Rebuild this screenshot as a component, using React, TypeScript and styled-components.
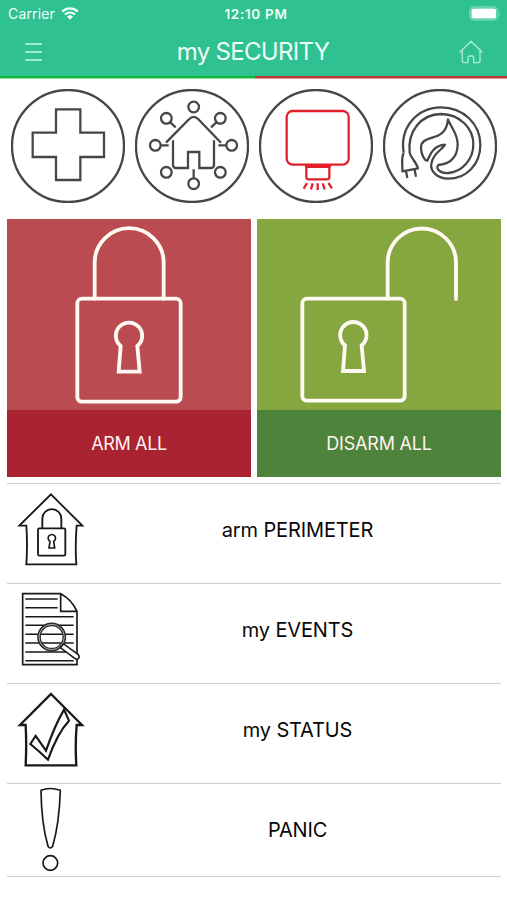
import React from "react";
import styled, { createGlobalStyle } from "styled-components";

const GlobalStyle = createGlobalStyle`
  * { box-sizing: border-box; }
  body { margin: 0; background: #fff; font-family: Inter, "Liberation Sans", sans-serif; }
  svg { display: block; fill: none; flex: none; }
`;

const Screen = styled.main`
  width: 507px;
  height: 900px;
  overflow: hidden;
  background: #fff;
`;

const Header = styled.header`
  height: 76px;
  background: #30c192;
  color: #edfff7;
`;

const StatusBar = styled.div`
  display: grid;
  grid-template-columns: 1fr auto 1fr;
  align-items: center;
  height: 27px;
  padding: 0 6px 0 8px;
  font-size: 14px;
`;

const Carrier = styled.div`
  display: flex;
  align-items: center;
  gap: 6px;
  letter-spacing: 0.15px;
`;

const Clock = styled.div`
  padding-left: 3px;
  font-size: 13.5px;
  font-weight: 600;
  letter-spacing: 0.7px;
`;

const BatterySlot = styled.div`
  display: flex;
  justify-content: flex-end;
`;

const NavBar = styled.div`
  display: flex;
  align-items: center;
  justify-content: space-between;
  height: 49px;
  padding: 0 23px 0 24px;
`;

const Title = styled.h1`
  margin: 0 0 0 5px;
  font-size: 24px;
  line-height: 49px;
  font-weight: 400;
  letter-spacing: -0.7px;
`;

const IconButton = styled.button`
  padding: 0;
  border: 0;
  background: none;
  color: inherit;
`;

const Progress = styled.div`
  display: grid;
  grid-template-columns: 255px 1fr;
  height: 3px;
`;

const ProgressPart = styled.div<{ $top: string; $bottom: string }>`
  background: linear-gradient(${(p) => p.$top} 67%, ${(p) => p.$bottom} 67%);
`;

const Categories = styled.nav`
  display: flex;
  gap: 10px;
  padding: 10px 11px 16px;
`;

const CategoryIcon = styled.svg`
  width: 114px;
  height: 114px;
  stroke: #464547;
  stroke-width: 6.8;
`;

const Tiles = styled.section`
  display: grid;
  grid-template-columns: 244px 244px;
  gap: 6px;
  padding: 0 7px 6px;
`;

const Tile = styled.button<{ $color: string }>`
  display: block;
  height: 258px;
  padding: 0;
  border: 0;
  background: ${(p) => p.$color};
  font-family: inherit;
`;

const TileIcon = styled.svg`
  width: 244px;
  height: 191px;
  stroke: #fff9f4;
  stroke-width: 11.5;
  stroke-linejoin: round;
  stroke-linecap: round;
`;

const TileLabel = styled.div<{ $color: string; $spacing: number }>`
  height: 67px;
  line-height: 67px;
  text-align: center;
  font-size: 18px;
  letter-spacing: ${(p) => p.$spacing}px;
  color: #fff2ee;
  background: ${(p) => p.$color};
`;

const List = styled.section`
  margin: 0 6px 0 7px;
  border-top: 1px solid #cdcdcd;
`;

const Row = styled.div<{ $height: number }>`
  display: grid;
  grid-template-columns: 90px 1fr 3px;
  height: ${(p) => p.$height}px;
  border-bottom: 1px solid #cdcdcd;
`;

const RowIcon = styled.svg`
  width: 90px;
  height: 100%;
  stroke: #18181a;
`;

const RowLabel = styled.div<{ $spacing: number }>`
  height: 92px;
  line-height: 92px;
  text-align: center;
  font-size: 20px;
  letter-spacing: ${(p) => p.$spacing}px;
  color: #080808;
`;

const Wifi = () => (
  <svg width="18" height="13" viewBox="0 0 18 13">
    <path d="M1.2 4.6C5.7.4 12.3.4 16.8 4.6M4 7.5c3-2.6 7-2.6 10 0" stroke="currentColor" strokeWidth="2.3" />
    <path d="M5.9 9.6c1.9-1.7 4.3-1.7 6.2 0L9 12.7z" fill="currentColor" />
  </svg>
);

const Battery = () => (
  <svg width="32" height="15" viewBox="0 0 32 15">
    <rect x=".8" y="1" width="28" height="13" rx="4" stroke="#8fe2c5" />
    <rect x="2.4" y="2.6" width="24.8" height="9.8" rx="2" fill="#fff" />
    <path d="M30.3 5.5q1.5 2 0 4" fill="#8fe2c5" />
  </svg>
);

const Keyhole = ({ x = 0, y = 0 }: { x?: number; y?: number }) => (
  <path transform={`translate(${x} ${y})`} d="M362 408A39.5 39.5 0 1 1 412 408L419 485H356Z" strokeLinejoin="miter" />
);

export default function App() {
  return (
    <>
      <GlobalStyle />
      <Screen>
        <Header>
          <StatusBar>
            <Carrier>Carrier <Wifi /></Carrier>
            <Clock>12:10 PM</Clock>
            <BatterySlot><Battery /></BatterySlot>
          </StatusBar>
          <NavBar>
            <IconButton aria-label="Menu">
              <svg width="19" height="20" viewBox="0 0 19 20" stroke="#c9f7e5" strokeWidth="1.5">
                <path d="M1.3 2H18M1.3 10H18M1.3 18H18" />
              </svg>
            </IconButton>
            <Title>my SECURITY</Title>
            <IconButton aria-label="Home">
              <svg width="26" height="26" viewBox="615 116 78 78" stroke="#a8eed6" strokeWidth="4" strokeLinejoin="round" strokeLinecap="round">
                <path d="M621 155L654 123L687 155M628 151V183Q628 187 632 187H645V173Q645 167 651 167H657Q662 167 662 173V187H677Q681 187 681 183V151" />
              </svg>
            </IconButton>
          </NavBar>
        </Header>
        <Progress>
          <ProgressPart $top="#13b541" $bottom="#8fe2a5" />
          <ProgressPart $top="#b43c3d" $bottom="#ff8c8c" />
        </Progress>

        <Categories>
          <CategoryIcon viewBox="33 27 342 342">
            <circle cx="204" cy="198" r="168" />
            <path d="M168 88H241V158H312V231H241V300H168V231H98V158H168Z" />
          </CategoryIcon>
          <CategoryIcon viewBox="21 27 342 342">
            <circle cx="192" cy="198" r="168" />
            <circle cx="197" cy="81" r="16" />
            <circle cx="115" cy="115" r="16" />
            <circle cx="277" cy="115" r="16" />
            <circle cx="82" cy="196" r="16" />
            <circle cx="311" cy="196" r="16" />
            <circle cx="115" cy="277" r="16" />
            <circle cx="277" cy="277" r="16" />
            <circle cx="197" cy="311" r="16" />
            <path d="M127 127L143 142M265 127L249 142M98 196H122M295 196H271M197 295V268" />
            <path d="M114 188L183 118Q197 103 211 118L279 188M135 181V254Q135 264 145 264H180V216H214V264H248Q258 264 258 254V181" />
          </CategoryIcon>
          <CategoryIcon viewBox="21 27 342 342">
            <circle cx="192" cy="198" r="168" />
            <g stroke="#e0202a">
              <rect x="104" y="93" width="186" height="161" rx="18" />
              <path d="M163 262V291Q163 298 170 298H225Q232 298 232 291V262M159 258H237" />
              <path d="M162 260H234" strokeWidth="8" />
              <path d="M165 309L155 326M182 310L177 328M197 310V330M212 310L218 328M229 309L240 325" />
            </g>
          </CategoryIcon>
          <CategoryIcon viewBox="18 27 342 342" strokeLinejoin="round">
            <circle cx="189" cy="198" r="168" />
            <path d="M80 218C68 145 117 83 192 82C259 82 310 132 310 194C310 254 267 296 214 296C180 296 159 273 163 251C168 218 194 212 204 194C170 196 160 222 151 242C143 243 132 222 132 204C132 157 206 194 213 118C222 143 242 160 242 192C242 237 213 253 184 255C175 264 187 281 214 279C253 276 289 241 289 193C289 145 249 103 193 102C131 103 91 154 98 219" />
            <path d="M80 218C72 235 77 252 76 274L123 265C119 248 104 237 98 219M87 274L91 294M113 270L117 290" />
          </CategoryIcon>
        </Categories>

        <Tiles>
          <Tile $color="#ba4b50">
            <TileIcon viewBox="21 27 732 573">
              <path d="M284 266V158A103.5 103.5 0 0 1 491 158V266" />
              <rect x="232" y="266" width="310" height="309" rx="14" />
              <Keyhole />
            </TileIcon>
            <TileLabel $color="#a92333" $spacing={-0.35}>ARM ALL</TileLabel>
          </Tile>
          <Tile $color="#86a73f">
            <TileIcon viewBox="15 27 732 573">
              <path d="M407 266V158A102.5 102.5 0 0 1 612 158V267" />
              <rect x="151" y="266" width="307" height="306" rx="14" />
              <Keyhole x={-83} y={-2} />
            </TileIcon>
            <TileLabel $color="#4d833b" $spacing={-0.2}>DISARM ALL</TileLabel>
          </Tile>
        </Tiles>

        <List>
          <Row $height={100}>
            <RowIcon viewBox="21 12 270 297" strokeWidth="5.5">
              <path d="M153 43L247 137H230Q225 195 229 253H79Q83 195 79 137H58Z" />
              <path d="M127 145V116A28.5 28.5 0 0 1 184 116V145" />
              <rect x="114" y="145" width="82" height="82" rx="4" />
              <path d="M150 184A11 11 0 1 1 161 184L164 204H147Z" strokeWidth="5" />
            </RowIcon>
            <RowLabel $spacing={-0.13}>arm PERIMETER</RowLabel>
          </Row>
          <Row $height={100}>
            <RowIcon viewBox="21 12 270 297" strokeWidth="5">
              <path d="M68 41H182Q215 58 231 94V254H68ZM182 41V94H231" />
              <path d="M76 57H173M76 83H173M76 110H221M76 136H221M76 163H221M76 189H221M76 216H221M76 242H221" strokeWidth="4.5" />
              <circle cx="155" cy="171" r="38" strokeWidth="11" stroke="#29292b" />
              <circle cx="155" cy="171" r="38" strokeWidth="3" stroke="#b0b0b0" />
              <path d="M181 203L191 192L235 224Q240 230 235 236Q229 240 224 235Z" fill="#fff" strokeWidth="4.5" />
            </RowIcon>
            <RowLabel $spacing={-0.15}>my EVENTS</RowLabel>
          </Row>
          <Row $height={100}>
            <RowIcon viewBox="21 12 270 297" strokeWidth="7">
              <path d="M153 42L246 135H230Q225 195 229 256H77Q80 195 77 135H60Z" />
              <path d="M91 192L107 168L138 212C156 160 171 125 192 89L207 122C178 153 161 190 144 239Q118 214 91 192Z" strokeWidth="6.5" />
            </RowIcon>
            <RowLabel $spacing={-0.15}>my STATUS</RowLabel>
          </Row>
          <Row $height={93}>
            <RowIcon viewBox="21 27 270 276" strokeWidth="5" stroke="#303033">
              <path d="M123 46Q150 35 181 46Q178 145 158 214Q151 224 144 214Q124 145 123 46Z" />
              <circle cx="151" cy="264" r="22" />
            </RowIcon>
            <RowLabel $spacing={-0.2}>PANIC</RowLabel>
          </Row>
        </List>
      </Screen>
    </>
  );
}
